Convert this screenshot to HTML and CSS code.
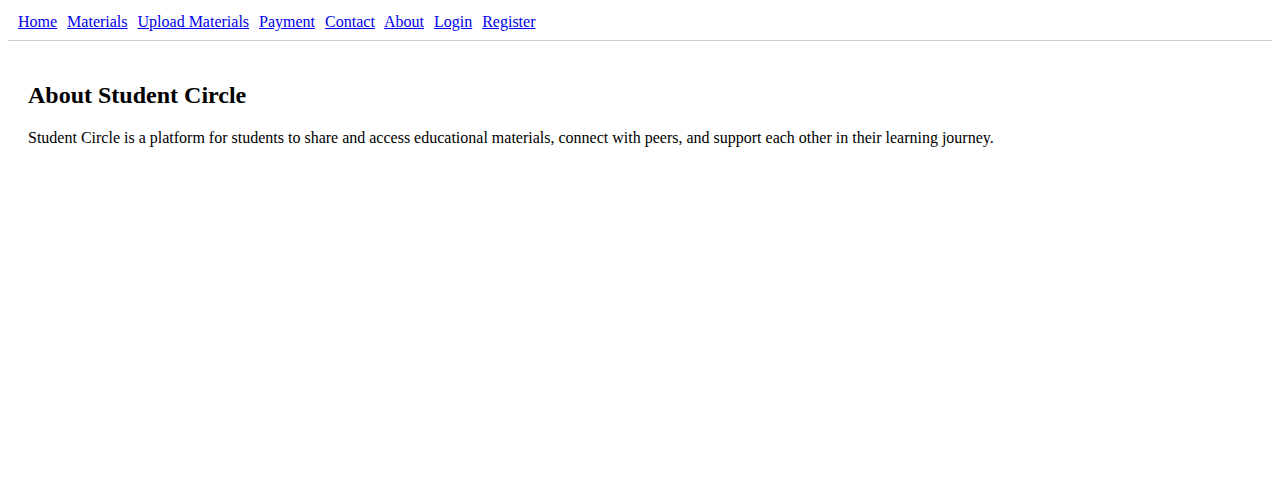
FILE: index.html
```html
<!DOCTYPE html>
<html>
<head>
<meta charset="utf-8">
<title>About - Student Circle</title>
<link rel="stylesheet" href="styles.css">
</head>
<body>
<nav class="nav">
<a href="#">Home</a>
<a href="#">Materials</a>
<a href="#">Upload Materials</a>
<a href="#">Payment</a>
<a href="#">Contact</a>
<a href="#">About</a>
<a href="#">Login</a>
<a href="#">Register</a>
</nav>
<main class="content">
<h2 class="title">About Student Circle</h2>
<p class="text">Student Circle is a platform for students to share and access educational materials, connect with peers, and support each other in their learning journey.</p>
</main>
</body>
</html>
```
FILE: styles.css
```css
body {
  margin: 8px;
  font-family: "Liberation Serif", "Times New Roman", serif;
  font-size: 16px;
  color: #000;
  background: #fff;
}
.nav {
  padding: 5px 10px 9px;
  border-bottom: 1px solid #ccc;
}
.nav a {
  color: #0000ee;
  margin-right: 6px;
}
.content {
  padding: 21px 20px 20px;
}
.title {
  font-size: 1.5em;
  margin: 0.83em 0;
}
.text {
  margin: 1em 0;
}
```
